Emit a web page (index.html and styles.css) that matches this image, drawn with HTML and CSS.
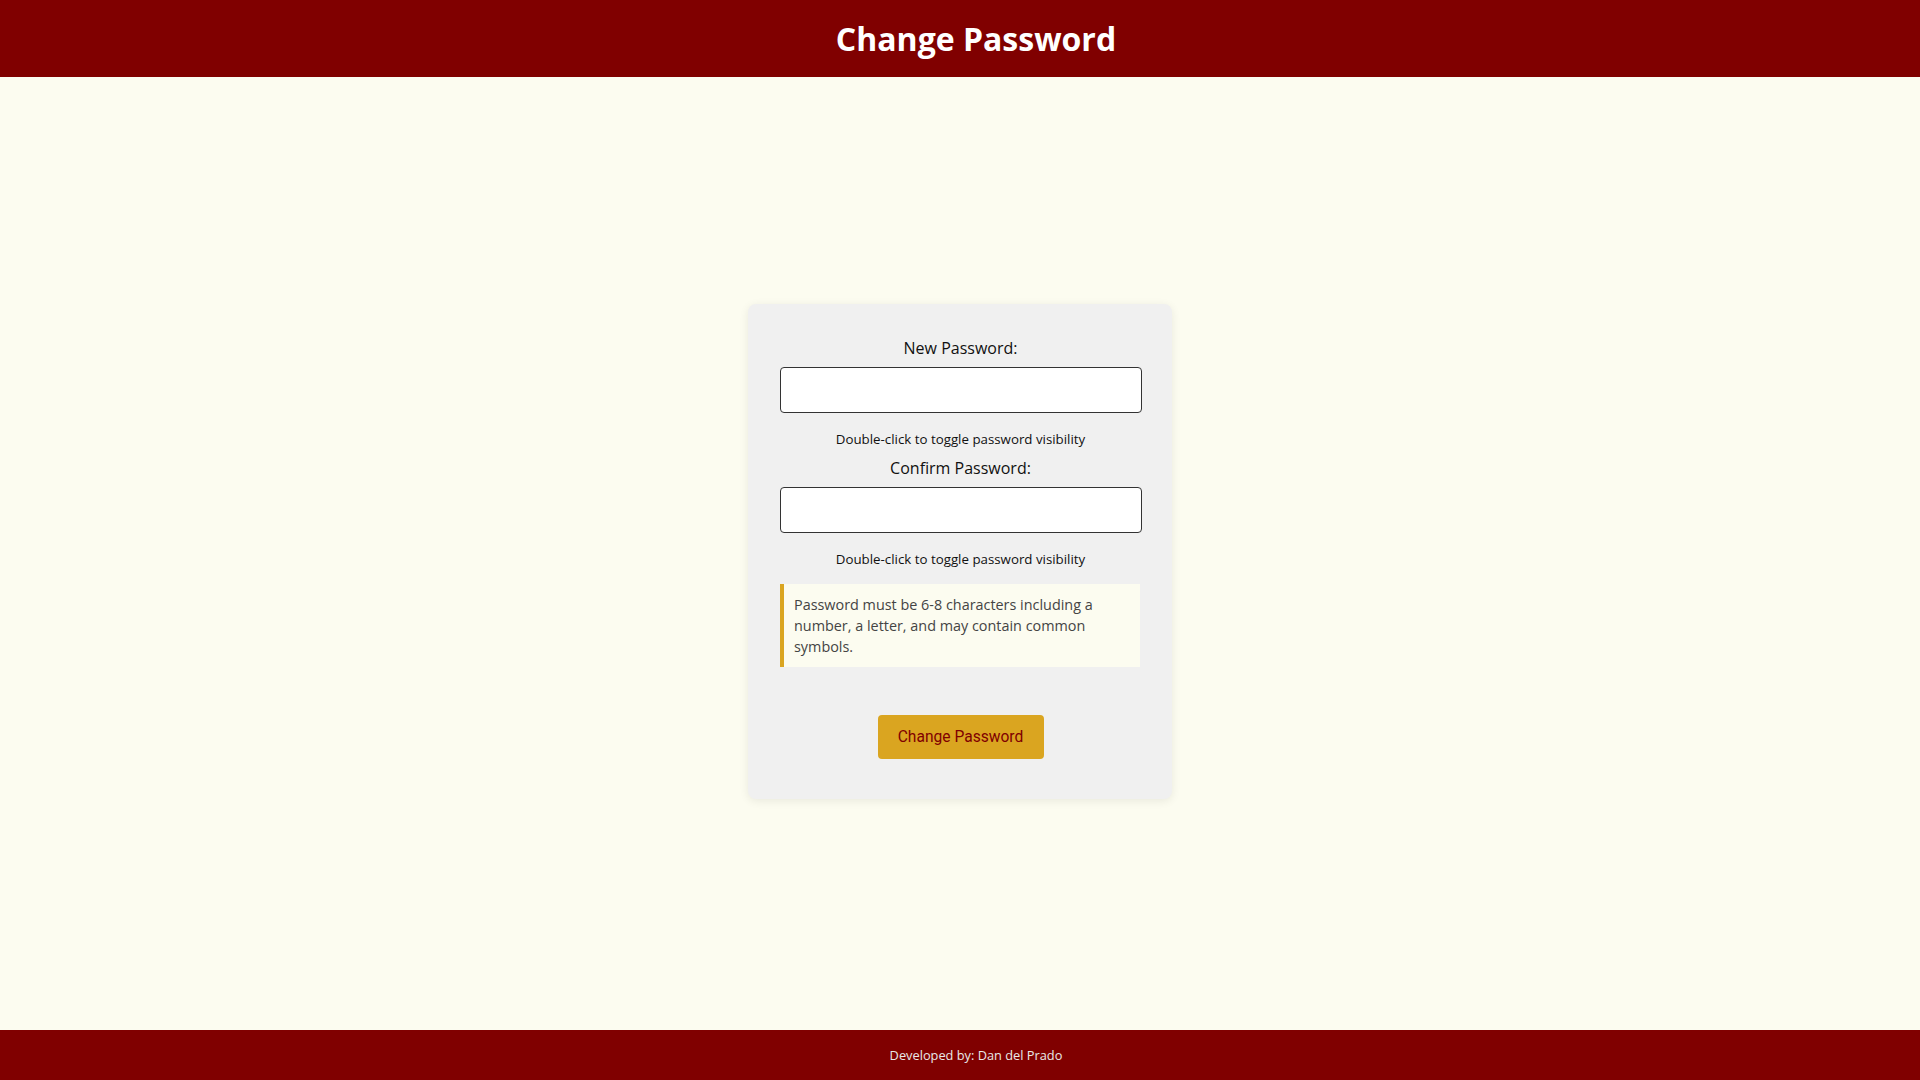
FILE: index.html
```html
<!DOCTYPE html>
<html lang="en">
<head>
<meta charset="utf-8">
<title>Change Password</title>
<link rel="stylesheet" href="styles.css">
</head>
<body>
<header class="site-header">
  <h1 class="site-title">Change Password</h1>
</header>
<main class="main">
  <form class="card">
    <label class="field-label" for="pw1">New Password:</label>
    <input class="field-input" id="pw1" type="password">
    <p class="hint">Double-click to toggle password visibility</p>
    <label class="field-label" for="pw2">Confirm Password:</label>
    <input class="field-input" id="pw2" type="password">
    <p class="hint">Double-click to toggle password visibility</p>
    <div class="notice">Password must be 6-8 characters including a number, a letter, and may contain common symbols.</div>
    <div class="actions">
      <button class="btn" type="button">Change Password</button>
    </div>
  </form>
</main>
<footer class="site-footer">Developed by: Dan del Prado</footer>
</body>
</html>
```
FILE: styles.css
```css
* { box-sizing: border-box; }
html, body { height: 100%; }
body {
  margin: 0;
  font-family: "Open Sans", "Liberation Sans", sans-serif;
  background: #fcfcf0;
  color: #222;
  display: flex;
  flex-direction: column;
  min-height: 100vh;
}
.site-header {
  background: #800000;
  height: 77px;
  display: flex;
  align-items: center;
  justify-content: center;
  padding-left: 32px;
}
.site-title {
  margin: 0;
  color: #fff;
  font-size: 32px;
  font-weight: 700;
  line-height: 1;
  padding-top: 1px;
}
.main {
  flex: 1;
  display: flex;
  align-items: center;
  justify-content: center;
}
.card {
  width: 424px;
  background: #f0f0f0;
  border-radius: 8px;
  box-shadow: 0 2px 10px rgba(0, 0, 0, 0.08);
  padding: 33px 31px 40px 32px;
  display: flex;
  flex-direction: column;
  margin-top: -5px;
}
.field-label {
  display: block;
  text-align: center;
  font-size: 16px;
  line-height: 22px;
  color: #111;
  margin-bottom: 8px;
}
.field-input {
  width: 362px;
  height: 46px;
  border: 1px solid #333;
  border-radius: 4px;
  background: #fff;
  padding: 0 10px;
  font-size: 16px;
}
.hint {
  margin: 17px 0 9px;
  text-align: center;
  font-size: 13.3px;
  line-height: 18px;
  color: #111;
}
.notice {
  margin-top: 7px;
  width: 360px;
  background: #fcfcf0;
  border-left: 4px solid #daa520;
  padding: 10px;
  font-size: 14.4px;
  line-height: 21px;
  color: #444;
}
.actions {
  display: flex;
  justify-content: center;
  margin-top: 48px;
}
.btn {
  width: 166px;
  height: 44px;
  background: #daa520;
  color: #800000;
  border: none;
  border-radius: 4px;
  font-family: Roboto, "Liberation Sans", sans-serif;
  font-size: 15.6px;
}
.site-footer {
  background: #800000;
  height: 50px;
  display: flex;
  align-items: center;
  justify-content: center;
  padding-left: 32px;
  color: #e8e8e8;
  font-size: 12.8px;
}
```
